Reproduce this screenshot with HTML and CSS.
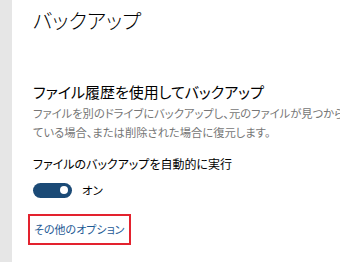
FILE: index.html
```html
<!DOCTYPE html>
<html lang="ja">
<head>
<meta charset="utf-8">
<link rel="stylesheet" href="styles.css">
</head>
<body>
<div class="page">
  <div class="sidebar"></div>
  <main class="main">
    <h1 class="title">バックアップ</h1>
    <h2 class="section">ファイル履歴を使用してバックアップ</h2>
    <p class="desc">ファイルを別のドライブにバックアップし、元のファイルが見つからなくなっ<br>ている場合、または削除された場合に復元します。</p>
    <div class="label">ファイルのバックアップを自動的に実行</div>
    <div class="toggle-row">
      <span class="toggle"><span class="knob"></span></span>
      <span class="toggle-text">オン</span>
    </div>
    <div class="link-box"><a class="link">その他のオプション</a></div>
    <h2 class="section next">以前のバックアップをお探しですか?</h2>
  </main>
</div>
</body>
</html>
```
FILE: styles.css
```css
html, body {
  margin: 0;
  padding: 0;
  background: #fff;
  overflow: hidden;
}
body {
  font-family: "Noto Sans CJK JP", "Noto Sans", sans-serif;
  font-feature-settings: "palt";
  color: #000;
}
.page {
  display: flex;
  width: 340px;
  height: 262px;
  overflow: hidden;
}
.sidebar {
  width: 12px;
  flex: none;
  background: #e6e6e6;
}
.main {
  flex: 1;
  padding-left: 21px;
  padding-top: 6px;
  white-space: nowrap;
  overflow: hidden;
}
.title {
  margin: 0;
  font-size: 20.5px;
  font-weight: 300;
  line-height: 28px;
}
.section {
  margin: 47px 0 0;
  font-size: 15px;
  font-weight: 400;
  line-height: 22px;
}
.desc {
  margin: 1px 0 0;
  font-size: 11.3px;
  line-height: 19px;
  color: #767676;
}
.label {
  margin-top: 13px;
  font-size: 12px;
  line-height: 18px;
}
.toggle-row {
  display: flex;
  align-items: center;
  gap: 10px;
  margin-top: 9px;
  height: 16px;
}
.toggle {
  width: 39px;
  height: 15px;
  border-radius: 8px;
  background: #1b4a76;
  display: flex;
  align-items: center;
  justify-content: flex-end;
  padding-right: 4px;
  box-sizing: border-box;
}
.knob {
  width: 8px;
  height: 8px;
  border-radius: 50%;
  background: #fff;
}
.toggle-text {
  font-size: 11.5px;
  line-height: 16px;
}
.link-box {
  display: inline-block;
  margin: 16px 0 0 -5px;
  padding: 5px 4px;
  border: 2px solid #e3222e;
}
.link {
  display: block;
  font-size: 11px;
  line-height: 17px;
  color: #1e5a95;
}
.next {
  margin-top: 14px;
}
```
